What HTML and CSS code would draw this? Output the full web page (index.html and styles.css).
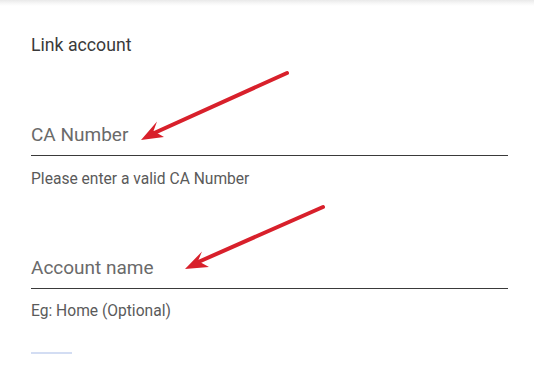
FILE: index.html
```html
<!DOCTYPE html>
<html lang="en">
<head>
<meta charset="utf-8">
<title>Link account</title>
<link rel="stylesheet" href="styles.css">
</head>
<body>
<div class="page">
  <div class="topshade"></div>
  <main class="content">
    <h1 class="title">Link account</h1>
    <div class="field first">
      <div class="label">CA Number</div>
    </div>
    <div class="helper">Please enter a valid CA Number</div>
    <div class="field">
      <div class="label">Account name</div>
    </div>
    <div class="helper">Eg: Home (Optional)</div>
    <div class="progress"></div>
  </main>
  <svg class="annot" width="534" height="367" viewBox="0 0 534 367" aria-hidden="true">
    <g stroke="#d8202b" stroke-width="4" stroke-linecap="round" fill="#d8202b">
      <line x1="287" y1="73" x2="152" y2="134"/>
      <line x1="323" y1="207" x2="196" y2="263"/>
    </g>
    <g fill="#d8202b">
      <path d="M141 140 L157 121.5 L153.5 131 L164 137 Z"/>
      <path d="M185 269 L202 251.5 L198 261 L209 267 Z"/>
    </g>
  </svg>
</div>
</body>
</html>
```
FILE: styles.css
```css
html, body {
  margin: 0;
  padding: 0;
  background: #ffffff;
}
body {
  font-family: Roboto, "Liberation Sans", Arial, sans-serif;
}
.page {
  position: relative;
  width: 534px;
  height: 367px;
  overflow: hidden;
  background: #fff;
}
.topshade {
  height: 6px;
  background: linear-gradient(to bottom, #e9e9e9, #f6f6f6 50%, #ffffff);
}
.content {
  padding: 29px 26px 0 31px;
}
.title {
  margin: 0;
  font-size: 17.7px;
  font-weight: 400;
  line-height: 20px;
  color: #3a3a3a;
}
.field {
  margin-top: 68px;
  padding-bottom: 8px;
  border-bottom: 1px solid #3a3a3a;
}
.label {
  font-size: 19px;
  line-height: 24px;
  color: #6a6a6a;
}
.helper {
  margin-top: 13.5px;
  font-size: 15.6px;
  line-height: 18px;
  color: #5a5a5a;
}
.progress {
  margin-top: 32px;
  width: 41px;
  height: 2px;
  background: #d3ddf3;
}
.annot {
  position: absolute;
  left: 0;
  top: 0;
  pointer-events: none;
}
```
